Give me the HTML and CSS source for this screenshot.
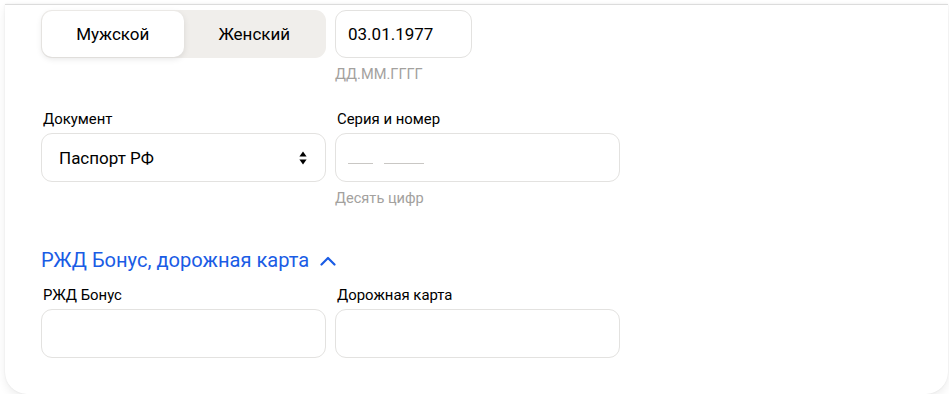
FILE: index.html
```html
<!DOCTYPE html>
<html lang="ru">
<head>
<meta charset="utf-8">
<title>Пассажир</title>
<link rel="stylesheet" href="styles.css">
</head>
<body>
<section class="card">
  <div class="row row-first">
    <div class="field">
      <div class="segmented">
        <button class="seg seg-active">Мужской</button>
        <button class="seg">Женский</button>
      </div>
    </div>
    <div class="field field-date">
      <div class="control control-short"><span class="value">03.01.1977</span></div>
      <div class="hint">ДД.ММ.ГГГГ</div>
    </div>
  </div>

  <div class="row row-doc">
    <div class="field field-wide">
      <label class="label">Документ</label>
      <div class="control control-select">
        <span class="value">Паспорт РФ</span>
        <svg class="sort" width="8" height="14" viewBox="0 0 8 14"><path d="M4 0.5 L7.6 5.6 H0.4 Z" fill="#000"/><path d="M4 13.5 L7.6 8.4 H0.4 Z" fill="#000"/></svg>
      </div>
    </div>
    <div class="field field-wide">
      <label class="label">Серия и номер</label>
      <div class="control">
        <span class="mask"><span class="slot slot-4"></span><span class="slot slot-6"></span></span>
      </div>
      <div class="hint">Десять цифр</div>
    </div>
  </div>

  <button class="toggle">РЖД Бонус, дорожная карта
    <svg class="chevron" width="16" height="10" viewBox="0 0 16 10"><path d="M1.5 8.5 L8 2 L14.5 8.5" fill="none" stroke="#1a5ce5" stroke-width="2.2" stroke-linecap="round" stroke-linejoin="round"/></svg>
  </button>

  <div class="row row-cards">
    <div class="field field-wide">
      <label class="label">РЖД Бонус</label>
      <div class="control"></div>
    </div>
    <div class="field field-wide">
      <label class="label">Дорожная карта</label>
      <div class="control"></div>
    </div>
  </div>
</section>
</body>
</html>
```

FILE: styles.css
```css
* {
  box-sizing: border-box;
}

body {
  margin: 0;
  background: #ffffff;
  font-family: Roboto, "Noto Sans", Arial, sans-serif;
  color: #21201f;
}

.card {
  margin: 4px 1px 0 5px;
  padding: 5px 36px 36px;
  background: #fff;
  border-top: 1px solid #dcdcdc;
  border-radius: 0 0 22px 22px;
  box-shadow: 0 4px 10px rgba(0, 0, 0, 0.07), 0 0 2px rgba(0, 0, 0, 0.08);
}

.row {
  display: flex;
  gap: 9px;
  align-items: flex-start;
}

.row-doc {
  margin-top: 28px;
}

.row-cards {
  margin-top: 14px;
}

.field {
  display: flex;
  flex-direction: column;
}

.field-wide {
  width: 285px;
}

.field-date {
  width: 137px;
}

.label {
  font-size: 14.9px;
  line-height: 19px;
  padding-left: 2px;
  margin-bottom: 4px;
  color: #000;
}

.segmented {
  display: flex;
  width: 285px;
  height: 48px;
  padding: 1px;
  background: #f0eeeb;
  border-radius: 11px;
}

.seg {
  flex: 1;
  border: 0;
  background: transparent;
  font: inherit;
  font-size: 17px;
  color: #000;
  border-radius: 10px;
  padding: 0;
  cursor: pointer;
}

.seg-active {
  background: #fff;
  box-shadow: 0 2px 6px rgba(0, 0, 0, 0.1);
}

.control {
  height: 49px;
  border: 1px solid #e3e2e0;
  border-radius: 11px;
  display: flex;
  align-items: center;
  padding: 0 12px;
  background: #fff;
}

.control-short {
  height: 48px;
}

.value {
  font-size: 17px;
  color: #000;
}

.control-select {
  padding: 0 17px;
  justify-content: space-between;
}

.sort {
  margin-right: 1px;
}

.mask {
  display: flex;
  gap: 11px;
  margin-top: 12px;
}

.slot {
  height: 1px;
  background: #c9c7c4;
}

.slot-4 {
  width: 25px;
}

.slot-6 {
  width: 40px;
}

.hint {
  margin-top: 8px;
  font-size: 14.6px;
  line-height: 16px;
  color: #a3a19e;
}

.toggle {
  display: flex;
  align-items: center;
  gap: 11px;
  margin-top: 42px;
  padding: 0;
  border: 0;
  background: none;
  font: inherit;
  font-size: 20.1px;
  line-height: 24px;
  color: #1a5ce5;
  cursor: pointer;
}

.chevron {
  margin-top: 1px;
}
```
